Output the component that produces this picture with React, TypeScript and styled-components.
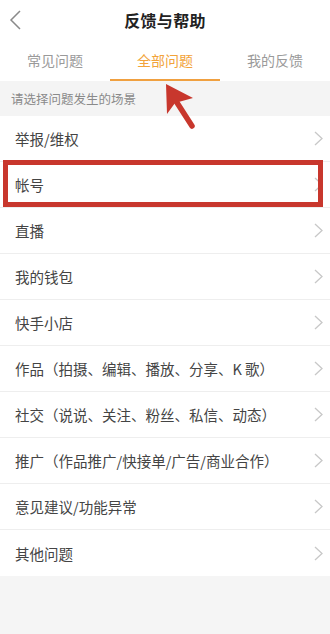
import styled, { createGlobalStyle } from "styled-components";
import { useState } from "react";

const GlobalStyle = createGlobalStyle`
  html, body {
    margin: 0;
    padding: 0;
    background: #f5f5f5;
  }
  body {
    font-family: "Noto Sans CJK SC", "Noto Sans", sans-serif;
  }
`;

const tabs = ["常见问题", "全部问题", "我的反馈"];

const topics = [
  "举报/维权",
  "帐号",
  "直播",
  "我的钱包",
  "快手小店",
  "作品（拍摄、编辑、播放、分享、K 歌）",
  "社交（说说、关注、粉丝、私信、动态）",
  "推广（作品推广/快接单/广告/商业合作）",
  "意见建议/功能异常",
  "其他问题",
];

const BackIcon = () => (
  <svg width="14" height="22" viewBox="0 0 14 22">
    <path d="M11 2 L2 11 L11 20" fill="none" stroke="#8a8a8a" strokeWidth="1.5" />
  </svg>
);

const Chevron = () => (
  <svg width="9" height="15" viewBox="0 0 9 15">
    <path d="M1 1 L8 7.5 L1 14" fill="none" stroke="#c8c8c8" strokeWidth="1.3" />
  </svg>
);

const Arrow = () => (
  <svg width="40" height="52" viewBox="0 0 40 52">
    <line x1="30" y1="46" x2="12" y2="18" stroke="#c8372d" strokeWidth="5.5" strokeLinecap="round" />
    <polygon points="4,4 5,34 13,23 31,18" fill="#c8372d" />
  </svg>
);

const App = () => {
  const [active, setActive] = useState(1);

  return (
    <Page>
      <GlobalStyle />
      <Header>
        <BackButton><BackIcon /></BackButton>
        <Title>反馈与帮助</Title>
      </Header>
      <TabBar>
        {tabs.map((t, i) => (
          <Tab key={t} $active={i === active} onClick={() => setActive(i)}>
            {t}
          </Tab>
        ))}
        <ArrowWrap><Arrow /></ArrowWrap>
      </TabBar>
      <Hint>请选择问题发生的场景</Hint>
      <List>
        {topics.map((t, i) => (
          <Row key={t} $highlight={i === 1}>
            <RowText>{t}</RowText>
            <Chevron />
          </Row>
        ))}
      </List>
    </Page>
  );
};

export default App;

const Page = styled.div`
  width: 330px;
  min-height: 634px;
  background: #f5f5f5;
  overflow: hidden;
`;

const Header = styled.div`
  position: relative;
  height: 40px;
  background: #fff;
  display: flex;
  align-items: center;
  justify-content: center;
`;

const BackButton = styled.div`
  position: absolute;
  left: 9px;
  top: 9px;
  display: flex;
`;

const Title = styled.div`
  font-size: 16px;
  font-weight: bold;
  color: #222;
  letter-spacing: 0.3px;
`;

const TabBar = styled.div`
  position: relative;
  display: grid;
  grid-template-columns: repeat(3, 1fr);
  background: #fff;
  height: 41px;
`;

const Tab = styled.div<{ $active: boolean }>`
  display: flex;
  align-items: center;
  justify-content: center;
  font-size: 14px;
  color: ${(p) => (p.$active ? "#f2a33a" : "#9a9a9a")};
  border-bottom: 2px solid ${(p) => (p.$active ? "#f0a040" : "transparent")};
  cursor: pointer;
`;

const ArrowWrap = styled.div`
  position: absolute;
  left: 162px;
  top: 40px;
  z-index: 3;
  display: flex;
`;

const Hint = styled.div`
  height: 35px;
  display: flex;
  align-items: center;
  padding-left: 11px;
  font-size: 12.5px;
  color: #8a8a8a;
  background: #f4f4f4;
`;

const List = styled.div`
  background: #fff;
`;

const Row = styled.div<{ $highlight?: boolean }>`
  position: relative;
  height: 46px;
  display: flex;
  align-items: center;
  justify-content: space-between;
  padding: 0 7px 0 15px;
  border-bottom: 1px solid #eeeeee;
  box-sizing: border-box;

  &:last-child {
    border-bottom: none;
  }

  ${(p) =>
    p.$highlight &&
    `
    &::after {
      content: "";
      position: absolute;
      left: 3px;
      right: 7px;
      top: -2px;
      bottom: 0;
      border: 5px solid #c8372d;
      pointer-events: none;
    }
  `}
`;

const RowText = styled.span`
  font-size: 14.5px;
  color: #444;
`;
